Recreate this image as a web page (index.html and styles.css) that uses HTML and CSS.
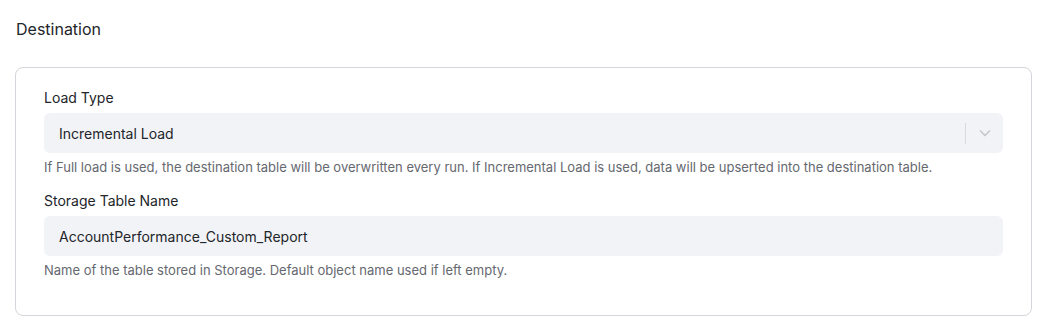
FILE: index.html
```html
<!DOCTYPE html>
<html lang="en">
<head>
    <meta charset="UTF-8">
    <title>Destination</title>
    <link rel="stylesheet" href="styles.css">
</head>
<body>
    <section class="section">
        <h2 class="section-title">Destination</h2>

        <div class="card">
            <div class="form-group">
                <label class="field-label">Load Type</label>
                <div class="select">
                    <span class="select-value">Incremental Load</span>
                    <div class="select-indicators">
                        <span class="select-sep"></span>
                        <svg class="select-chevron" width="20" height="20" viewBox="0 0 20 20">
                            <path d="M5.5 8l4.5 4.5 4.5-4.5" fill="none" stroke="#c6c8ce" stroke-width="1.7" stroke-linecap="round" stroke-linejoin="round"/>
                        </svg>
                    </div>
                </div>
                <p class="help">If Full load is used, the destination table will be overwritten every run. If Incremental Load is used, data will be upserted into the destination table.</p>
            </div>

            <div class="form-group">
                <label class="field-label">Storage Table Name</label>
                <input class="text-input" type="text" value="AccountPerformance_Custom_Report">
                <p class="help">Name of the table stored in Storage. Default object name used if left empty.</p>
            </div>
        </div>
    </section>
</body>
</html>
```

FILE: styles.css
```css
/* General */
body {
    margin: 0;
    font-family: 'Inter', 'Noto Sans', sans-serif;
    color: #222529;
    background: #fff;
}

.section {
    padding: 19px 15px 0 15px;
    width: 1017px;
}

.section-title {
    margin: 0 0 28px 1px;
    font-size: 16px;
    line-height: 20px;
    font-weight: 400;
}

.card {
    border: 1px solid #d5d6db;
    border-radius: 8px;
    padding: 20px 28px 36px 28px;
}

.form-group + .form-group {
    margin-top: 15px;
}

.field-label {
    display: block;
    font-size: 14px;
    line-height: 20px;
    margin-bottom: 5px;
}

.select,
.text-input {
    box-sizing: border-box;
    width: 100%;
    height: 40px;
    background: #f2f3f7;
    border: none;
    border-radius: 6px;
    font-family: inherit;
    font-size: 14px;
    color: #222529;
}

.select {
    display: flex;
    align-items: center;
    justify-content: space-between;
    padding-left: 15px;
}

.select-indicators {
    display: flex;
    align-items: center;
    height: 100%;
}

.select-sep {
    width: 1px;
    height: 21px;
    background: #d8d9de;
}

.select-chevron {
    margin: 0 8px 0 9px;
}

.text-input {
    display: block;
    padding: 0 15px;
    outline: none;
}

.help {
    margin: 6px 0 0 0;
    font-size: 13px;
    line-height: 17px;
    color: #65686f;
}
```
